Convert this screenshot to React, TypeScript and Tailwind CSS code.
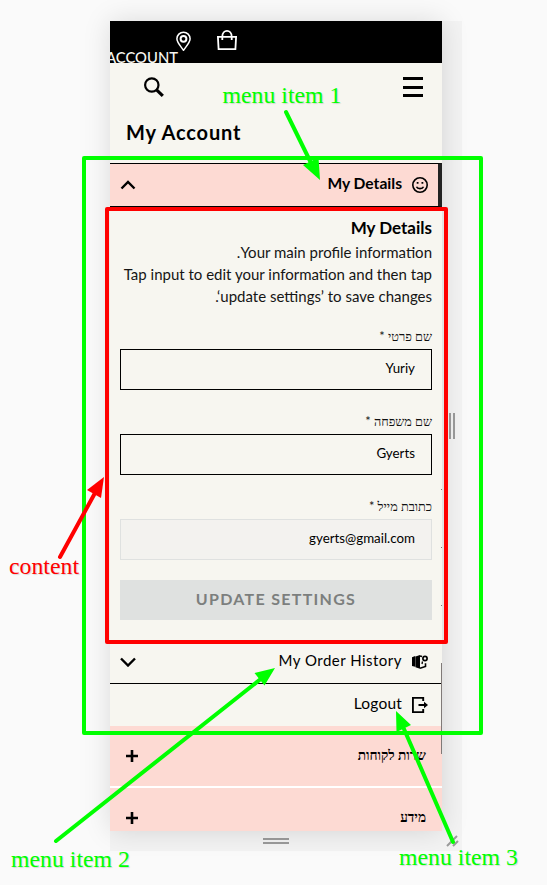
import React from 'react';

const LATO = "font-['Lato','Liberation_Serif',sans-serif]";

function Field({ label, value, disabled }: { label: string; value: string; disabled?: boolean }) {
  return (
    <div className="h-[85px]">
      <div dir="rtl" className="h-[23px] text-[12.700px] leading-[20px] text-[#111]">{label}</div>
      <div
        className={
          'flex h-[41px] items-center justify-end border pr-4 text-[13.333px] leading-[20px] pb-[4px] ' +
          (disabled ? 'border-[#dfe1e0] bg-[#f3f2ef]' : 'border-black')
        }
      >
        {value}
      </div>
    </div>
  );
}

function Plus() {
  return (
    <svg className="h-3 w-3" viewBox="0 0 12 12" fill="none" stroke="#000" strokeWidth="2.6">
      <path d="M6 0v12M0 6h12" />
    </svg>
  );
}

function Chevron({ up }: { up?: boolean }) {
  return (
    <svg className="h-[10px] w-4" viewBox="0 0 16 10" fill="none" stroke="#000" strokeWidth="2.4">
      <path d={up ? 'M1.5 8.5 8 2l6.5 6.5' : 'M1 1.5 8 8.5l7-7'} />
    </svg>
  );
}

function Phone() {
  return (
    <div className="relative h-[810px] w-[332px] overflow-hidden bg-[#f7f6f0] shadow-[0_0_26px_rgba(0,0,0,0.13)]">
      <div className="relative flex h-[42px] overflow-hidden bg-black pl-[66px] pt-[10px]">
        <svg className="h-5 w-[15px]" viewBox="0 0 15 20" fill="none" stroke="#fff" strokeWidth="1.5">
          <path d="M7.5 19.2C4.5 15 .9 11.5.9 7.8a6.6 6.6 0 0 1 13.2 0c0 3.700-3.600 7.200-6.600 11.400z" />
          <circle cx="7.500" cy="7.800" r="2.900" strokeWidth="2" />
        </svg>
        <svg className="-mt-px ml-[26px] h-5 w-5" viewBox="0 0 20 20" fill="none" stroke="#fff" strokeWidth="1.800">
          <path d="M.9 6.800h18.200l-.7 12.300H1.600zM5.300 10V6.800c0-7.800 9.400-7.800 9.400 0V10" />
        </svg>
        <span className="absolute left-[-4px] top-[27px] text-[14.800px] font-medium leading-[18px] text-[#f7f6f0]">ACCOUNT</span>
      </div>
      <div className="flex h-[48px] items-center justify-between pl-[34px] pr-[19px]">
        <svg className="h-5 w-5" viewBox="0 0 20 20" fill="none" stroke="#000">
          <circle cx="7.800" cy="8" r="6.700" strokeWidth="2.200" />
          <path d="m12.600 12.800 6.200 6" strokeWidth="3.200" />
        </svg>
        <div className="flex flex-col gap-[5.500px]">
          <i className="h-[3px] w-5 bg-black" />
          <i className="h-[3px] w-5 bg-black" />
          <i className="h-[3px] w-5 bg-black" />
        </div>
      </div>
      <h1 className="h-[52px] pl-[16px] pt-[8px] text-[20px] font-bold leading-[26px] tracking-[0.85px]">My Account</h1>

      <div className="flex h-[44px] items-center justify-between border-y border-r-4 border-y-black border-r-[#222] bg-[#fddad3] pl-[10px] pr-[10px]">
        <Chevron up />
        <div className="flex items-center gap-[10px]">
          <span className="pb-[4px] text-[15.600px] font-bold leading-5">My Details</span>
          <svg className="h-4 w-4" viewBox="0 0 16 16" fill="none" stroke="#000" strokeWidth="1.600">
            <circle cx="8" cy="8" r="7.200" />
            <path d="M4.500 9.800c1 2.400 6 2.400 7 0" />
            <path d="M4.700 5.900h1.800M9.500 5.900h1.800" strokeWidth="1.800" />
          </svg>
        </div>
      </div>

      <div className="h-[433px] pl-[10px] pr-[10px] pt-[10px]">
        <h2 className="text-right text-[17px] font-bold leading-[22px]">My Details</h2>
        <div dir="rtl" className="whitespace-nowrap pt-[2px] text-right text-[15px] leading-[22px] text-[#151515]">
          <p>Your main profile information.</p>
          <p>Tap input to edit your information and then tap</p>
          <p>update settings’ to save changes‘.</p>
        </div>
        <div className="pt-[19px]">
          <Field label="שם פרטי *" value="Yuriy" />
          <Field label="שם משפחה *" value="Gyerts" />
          <Field label="כתובת מייל *" value="gyerts@gmail.com" disabled />
        </div>
        <div className="-mt-px flex h-10 items-center justify-center bg-[#dfe1e0] pb-[2px] text-[16px] font-bold tracking-[1.300px] text-[#7c7f7e]">
          UPDATE SETTINGS
        </div>
      </div>

      <div className="flex h-[44px] items-center justify-between border-b border-black pl-[10px] pr-[14px]">
        <Chevron />
        <div className="flex items-center gap-[10px]">
          <span className="pb-[4px] text-[15px] leading-5 tracking-[0.480px]">My Order History</span>
          <svg className="h-4 w-4" viewBox="0 0 16 16">
            <path d="M0 3.200 3.200 2v10.800L0 12zM3.500 2.500 8 1v13.800l-4.500-1.500z" fill="#000" />
            <path d="M8 14.200l5.500-1.800V9.300M8 2l2 .5" fill="none" stroke="#000" strokeWidth="1.600" />
            <circle cx="13" cy="4.500" r="2.100" fill="none" stroke="#000" strokeWidth="1.700" />
            <path d="M10.500 7.500l-.5 2.500" stroke="#000" strokeWidth="1.300" />
          </svg>
        </div>
      </div>
      <div className="flex h-[42px] items-center justify-end gap-[10px] pr-[14px]">
        <span className="pb-[4px] text-[15.500px] leading-5 tracking-[0.200px]">Logout</span>
        <svg className="h-4 w-4" viewBox="0 0 16 16" fill="none" stroke="#000" strokeWidth="1.900">
          <path d="M11.200 4V.9H.9v14.200h10.300V12M6.500 8H14" />
          <path d="m12 4.800 4 3.200-4 3.200z" fill="#000" stroke="none" />
        </svg>
      </div>
      <div className="flex h-[60px] items-center justify-between bg-[#fddad3] pl-4 pr-4">
        <Plus />
        <span dir="rtl" className="pb-[2px] text-[13.600px] font-bold">שרות לקוחות</span>
      </div>
      <div className="mt-[2px] flex h-[60px] items-center justify-between bg-[#fddad3] pl-4 pr-4 shadow-[0_-2px_0_#fff]">
        <Plus />
        <span dir="rtl" className="pb-[2px] text-[13.600px] font-bold">מידע</span>
      </div>
      <i className="absolute right-0 top-[642px] h-[91px] w-px bg-[#807a78]" />
      <div className="absolute right-0 top-[468px] flex flex-col gap-[57px]">
        <i className="h-px w-px bg-[#777]" />
        <i className="h-px w-px bg-[#777]" />
        <i className="h-px w-px bg-[#777]" />
      </div>
    </div>
  );
}

function Annotations() {
  const note = "absolute whitespace-nowrap font-['Liberation_Serif',serif] text-[23.800px] leading-[28px] [text-shadow:1px_1px_1px_rgba(0,0,0,0.14)] ";
  return (
    <>
      <div className="absolute left-[82px] top-[156px] h-[579px] w-[401px] rounded-[2px] border-4 border-[#00ff00]" />
      <div className="absolute left-[105px] top-[207px] h-[437px] w-[343px] rounded-[2px] border-4 border-[#ff0000]" />
      <svg className="absolute left-0 top-0 h-[885px] w-[547px]" viewBox="0 0 547 885" strokeWidth="4" strokeLinecap="round">
        <g stroke="#0f0" fill="#0f0">
          <path d="M286 112 313 167M56 841 262 678M453 842 404 729" />
          <path stroke="none" d="M320 180 303 165 318.500 157.500zM275 668 254.500 673 264.500 685.500zM396 711 396.500 732 411 725z" />
        </g>
        <g stroke="#f00" fill="#f00">
          <path d="M60 557 95 493" />
          <path stroke="none" d="M104 477 87 490 101 498z" />
        </g>
      </svg>
      <span className={note + 'left-[222.500px] top-[81px] text-[#00ff00]'}>menu item 1</span>
      <span className={note + 'left-[11px] top-[845px] text-[#00ff00]'}>menu item 2</span>
      <span className={note + 'left-[399px] top-[843px] text-[#00ff00]'}>menu item 3</span>
      <span className={note + 'left-[9px] top-[552px] text-[#ff0000]'}>content</span>
    </>
  );
}

export default function App() {
  return (
    <div className={'relative h-[885px] w-[547px] overflow-hidden bg-[#fafafa] pl-[110px] pt-[21px] text-black ' + LATO}>
      <div className="grid h-[830px] w-[352px] grid-cols-[332px_20px] grid-rows-[810px_20px] bg-[#f3f3f3]">
        <Phone />
        <div className="flex items-center justify-center gap-[2px]">
          <i className="h-[26px] w-[2px] bg-[#9b9b9b]" />
          <i className="h-[26px] w-[2px] bg-[#9b9b9b]" />
        </div>
        <div className="flex flex-col items-center justify-center gap-[2px]">
          <i className="h-[2px] w-[26px] bg-[#9b9b9b]" />
          <i className="h-[2px] w-[26px] bg-[#9b9b9b]" />
        </div>
        <svg className="h-5 w-5" viewBox="0 0 20 20" stroke="#9b9b9b" strokeWidth="2">
          <path d="M5 15 15 5M11 15l5-5" />
        </svg>
      </div>
      <Annotations />
    </div>
  );
}
